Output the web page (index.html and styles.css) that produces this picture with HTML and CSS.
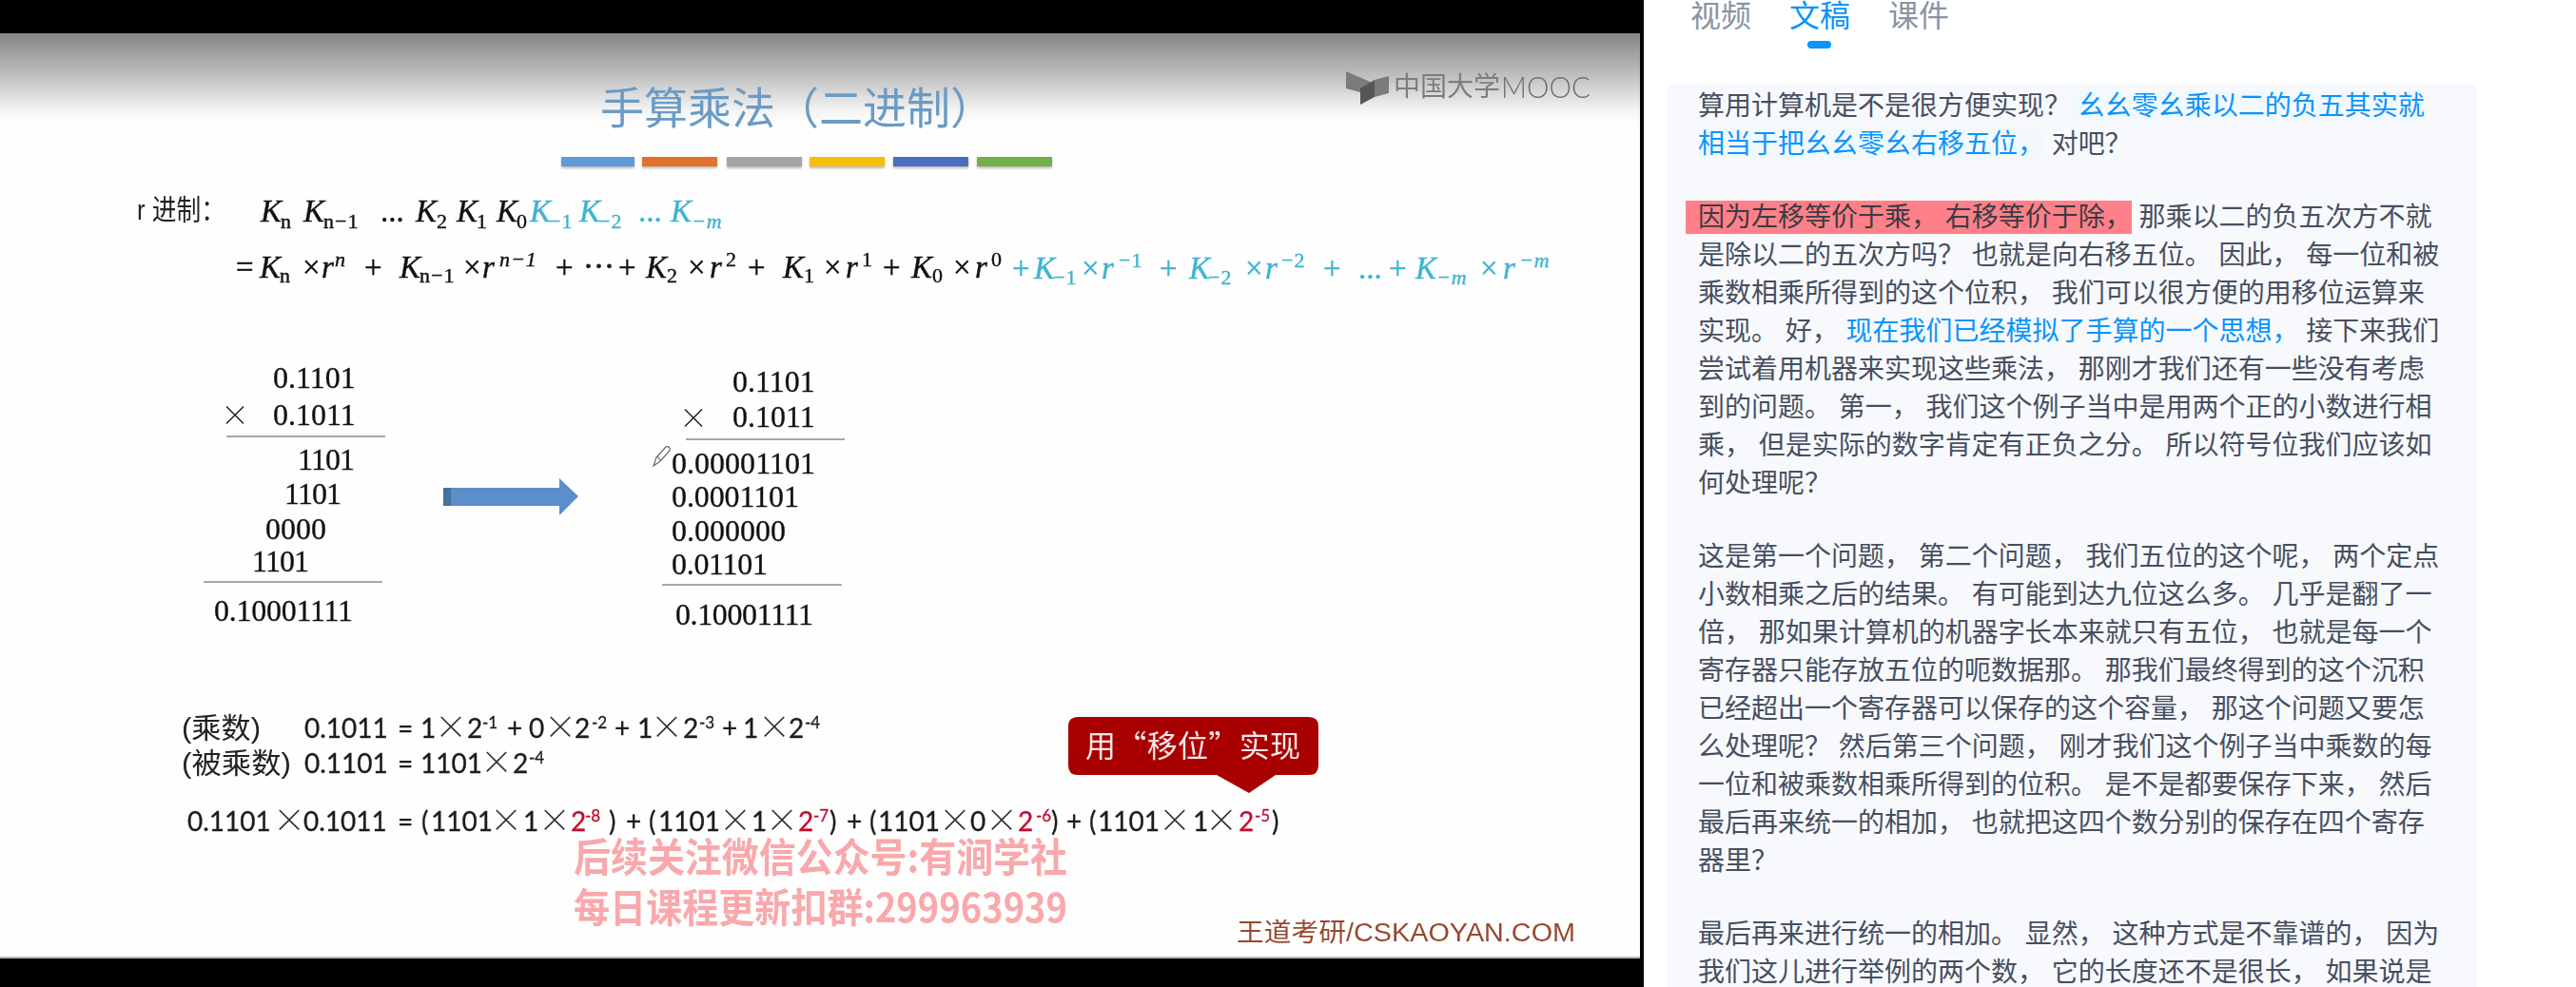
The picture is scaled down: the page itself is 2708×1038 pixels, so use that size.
FILE: index.html
```html
<!DOCTYPE html>
<html lang="zh-CN">
  <head>
    <meta charset="UTF-8" />
    <title>手算乘法（二进制）</title>
    <link rel="stylesheet" href="styles.css">
  </head>
  <body>
    <div class="player">
      <svg class="slide" viewBox="0 35 1724 973" width="1724" height="973">
        <defs>
          <linearGradient id="fade" x1="0" y1="0" x2="0" y2="1">
            <stop offset="0" stop-color="#858585" />
            <stop offset="0.45" stop-color="#bdbdbd" />
            <stop offset="0.85" stop-color="#f3f3f3" />
            <stop offset="1" stop-color="#fefefe" />
          </linearGradient>
        </defs>
        <rect x="0" y="35" width="1724" height="973" fill="#fefefe" />
        <rect x="0" y="35" width="1724" height="95" fill="url(#fade)" />
        <rect x="0" y="1006" width="1724" height="2" fill="#bbb" />

        <text class="title" x="631" y="130" textLength="414" lengthAdjust="spacingAndGlyphs">手算乘法（二进制）</text>
        <rect class="bar" x="590" y="165" width="77" height="10" fill="#5f9bd6" />
        <rect class="bar" x="675" y="165" width="79" height="10" fill="#e2722e" />
        <rect class="bar" x="764" y="165" width="79" height="10" fill="#a5a5a5" />
        <rect class="bar" x="851" y="165" width="79" height="10" fill="#f7bd0b" />
        <rect class="bar" x="939" y="165" width="79" height="10" fill="#4a6fbe" />
        <rect class="bar" x="1027" y="165" width="79" height="10" fill="#72b04c" />

        <!-- mooc logo -->
        <path fill="#7b7b7b" d="M1415 75 L1445 88 V102 L1430 97 L1415 93 Z" />
        <path fill="#7b7b7b" d="M1445 84 L1460 80 V98 L1445 102 Z" />
        <path fill="#565656" d="M1430 93 L1445 84 V102 L1430 110 Z" />
        <text class="logo-cn" x="1465" y="101" textLength="112" lengthAdjust="spacingAndGlyphs">中国大学</text>
        <text class="logo-en" x="1578" y="103" textLength="94" lengthAdjust="spacingAndGlyphs">MOOC</text>

        <text class="cjk-label" x="144" y="231" textLength="93" lengthAdjust="spacingAndGlyphs">r 进制：</text>

        <text class="math">
          <tspan class="k" x="274" y="233">K</tspan><tspan class="sub" x="295" y="240">n</tspan>
          <tspan class="k" x="319" y="233">K</tspan><tspan class="sub" x="340" y="240">n−1</tspan>
          <tspan x="400" y="233">...</tspan>
          <tspan class="k" x="437" y="233">K</tspan><tspan class="sub" x="459" y="240">2</tspan>
          <tspan class="k" x="480" y="233">K</tspan><tspan class="sub" x="501" y="240">1</tspan>
          <tspan class="k" x="522" y="233">K</tspan><tspan class="sub" x="543" y="240">0</tspan>
        </text>
        <text class="math blue">
          <tspan class="k" x="557" y="233">K</tspan><tspan class="sub" x="577" y="240">−1</tspan>
          <tspan class="k" x="609" y="233">K</tspan><tspan class="sub" x="629" y="240">−2</tspan>
          <tspan x="671" y="233">...</tspan>
          <tspan class="k" x="705" y="233">K</tspan><tspan class="sub k" x="727" y="240">−m</tspan>
        </text>

        <text class="math">
          <tspan x="248" y="292">=</tspan>
          <tspan class="k" x="273" y="292">K</tspan><tspan class="sub" x="294" y="297">n</tspan>
          <tspan x="318" y="292">×</tspan><tspan class="k" x="338" y="292">r</tspan><tspan class="sup k" x="352" y="280">n</tspan>
          <tspan x="383" y="292">+</tspan>
          <tspan class="k" x="420" y="292">K</tspan><tspan class="sub" x="441" y="297">n−1</tspan>
          <tspan x="487" y="292">×</tspan><tspan class="k" x="507" y="292">r</tspan><tspan class="sup k" x="525" y="280">n−1</tspan>
          <tspan x="584" y="292">+</tspan><tspan x="613" y="292">⋯</tspan><tspan x="650" y="292">+</tspan>
          <tspan class="k" x="679" y="292">K</tspan><tspan class="sub" x="701" y="297">2</tspan>
          <tspan x="723" y="292">×</tspan><tspan class="k" x="746" y="292">r</tspan><tspan class="sup" x="763" y="280">2</tspan>
          <tspan x="786" y="292">+</tspan>
          <tspan class="k" x="823" y="292">K</tspan><tspan class="sub" x="845" y="297">1</tspan>
          <tspan x="866" y="292">×</tspan><tspan class="k" x="889" y="292">r</tspan><tspan class="sup" x="906" y="280">1</tspan>
          <tspan x="928" y="292">+</tspan>
          <tspan class="k" x="958" y="292">K</tspan><tspan class="sub" x="980" y="297">0</tspan>
          <tspan x="1002" y="292">×</tspan><tspan class="k" x="1025" y="292">r</tspan><tspan class="sup" x="1042" y="280">0</tspan>
        </text>
        <text class="math blue">
          <tspan x="1064" y="293">+</tspan>
          <tspan class="k" x="1087" y="293">K</tspan><tspan class="sub" x="1107" y="299">−1</tspan>
          <tspan x="1137" y="293">×</tspan><tspan class="k" x="1158" y="293">r</tspan><tspan class="sup" x="1176" y="281">−1</tspan>
          <tspan x="1219" y="293">+</tspan>
          <tspan class="k" x="1250" y="293">K</tspan><tspan class="sub" x="1270" y="299">−2</tspan>
          <tspan x="1309" y="293">×</tspan><tspan class="k" x="1330" y="293">r</tspan><tspan class="sup" x="1347" y="281">−2</tspan>
          <tspan x="1391" y="293">+</tspan><tspan x="1428" y="293">...</tspan><tspan x="1460" y="293">+</tspan>
          <tspan class="k" x="1488" y="293">K</tspan><tspan class="sub k" x="1510" y="299">−m</tspan>
          <tspan x="1556" y="293">×</tspan><tspan class="k" x="1580" y="293">r</tspan><tspan class="sup k" x="1597" y="281">−m</tspan>
        </text>

        <!-- left working -->
        <text class="num" x="287" y="408">0.1101</text>
        <text class="times" x="232" y="447">×</text>
        <text class="num" x="287" y="447">0.1011</text>
        <rect class="rule" x="238" y="458" width="167" height="2" />
        <text class="num" x="313" y="494" textLength="60">1101</text>
        <text class="num" x="299" y="530" textLength="60">1101</text>
        <text class="num" x="279" y="567">0000</text>
        <text class="num" x="265" y="601" textLength="60">1101</text>
        <rect class="rule" x="214" y="611" width="188" height="2" />
        <text class="num" x="225" y="653" textLength="146">0.10001111</text>

        <path fill="#5b8fca" d="M466 513 H588 V503 L608 522 L588 542 V532 H466 Z" />
        <rect x="466" y="513" width="8" height="19" fill="#44719f" />

        <!-- right working -->
        <text class="num" x="770" y="412">0.1101</text>
        <text class="times" x="714" y="450">×</text>
        <text class="num" x="770" y="449">0.1011</text>
        <rect class="rule" x="721" y="461" width="167" height="2" />
        <path class="pencil" d="M690 481 L700 470 C703 469 705 471 704 474 L694 485 L687 490 Z M691 480 L695 485" />
        <text class="num" x="706" y="498" textLength="151">0.00001101</text>
        <text class="num" x="706" y="533" textLength="134">0.0001101</text>
        <text class="num" x="706" y="569" textLength="120">0.000000</text>
        <text class="num" x="706" y="604" textLength="101">0.01101</text>
        <rect class="rule" x="696" y="614" width="189" height="2" />
        <text class="num" x="710" y="657" textLength="145">0.10001111</text>

        <!-- weights -->
        <text class="cn" x="191" y="776" textLength="83" lengthAdjust="spacingAndGlyphs">(乘数)</text>
        <text class="cn" x="191" y="813" textLength="115" lengthAdjust="spacingAndGlyphs">(被乘数)</text>
        <text class="sum">
          <tspan x="320" y="776">0.1011</tspan><tspan x="418" y="776">=</tspan>
          <tspan x="442" y="776">1</tspan><tspan class="x" x="457" y="777">×</tspan><tspan x="491" y="776">2</tspan><tspan class="exp" x="507" y="766">-1</tspan>
          <tspan x="533" y="776">+</tspan>
          <tspan x="556" y="776">0</tspan><tspan class="x" x="572" y="777">×</tspan><tspan x="604" y="776">2</tspan><tspan class="exp" x="622" y="766">-2</tspan>
          <tspan x="646" y="776">+</tspan>
          <tspan x="670" y="776">1</tspan><tspan class="x" x="684" y="777">×</tspan><tspan x="718" y="776">2</tspan><tspan class="exp" x="735" y="766">-3</tspan>
          <tspan x="759" y="776">+</tspan>
          <tspan x="781" y="776">1</tspan><tspan class="x" x="797" y="777">×</tspan><tspan x="829" y="776">2</tspan><tspan class="exp" x="846" y="766">-4</tspan>
        </text>
        <text class="sum">
          <tspan x="320" y="813">0.1101</tspan><tspan x="418" y="813">=</tspan>
          <tspan x="442" y="813">1101</tspan><tspan class="x" x="505" y="814">×</tspan><tspan x="539" y="813">2</tspan><tspan class="exp" x="556" y="803">-4</tspan>
        </text>
        <text class="sum">
          <tspan x="197" y="874">0.1101</tspan><tspan class="x" x="287" y="875">×</tspan><tspan x="319" y="874">0.1011</tspan><tspan x="418" y="874">=</tspan>
          <tspan x="443" y="874">(</tspan><tspan x="453" y="874">1101</tspan><tspan class="x" x="515" y="875">×</tspan><tspan x="550" y="874">1</tspan><tspan class="x" x="566" y="875">×</tspan><tspan class="red" x="600" y="874">2</tspan><tspan class="exp red" x="615" y="864">-8</tspan><tspan x="640" y="874">)</tspan>
          <tspan x="658" y="874">+</tspan>
          <tspan x="682" y="874">(</tspan><tspan x="692" y="874">1101</tspan><tspan class="x" x="756" y="875">×</tspan><tspan x="790" y="874">1</tspan><tspan class="x" x="805" y="875">×</tspan><tspan class="red" x="839" y="874">2</tspan><tspan class="exp red" x="855" y="864">-7</tspan><tspan x="872" y="874">)</tspan>
          <tspan x="890" y="874">+</tspan>
          <tspan x="914" y="874">(</tspan><tspan x="923" y="874">1101</tspan><tspan class="x" x="987" y="875">×</tspan><tspan x="1020" y="874">0</tspan><tspan class="x" x="1036" y="875">×</tspan><tspan class="red" x="1070" y="874">2</tspan><tspan class="exp red" x="1089" y="864">-6</tspan><tspan x="1105" y="874">)</tspan>
          <tspan x="1121" y="874">+</tspan>
          <tspan x="1145" y="874">(</tspan><tspan x="1154" y="874">1101</tspan><tspan class="x" x="1218" y="875">×</tspan><tspan x="1254" y="874">1</tspan><tspan class="x" x="1267" y="875">×</tspan><tspan class="red" x="1302" y="874">2</tspan><tspan class="exp red" x="1319" y="864">-5</tspan><tspan x="1337" y="874">)</tspan>
        </text>

        <path fill="#a80000" d="M1133 754 H1376 Q1386 754 1386 764 V805 Q1386 815 1376 815 H1341 L1313 834 L1279 815 H1133 Q1123 815 1123 805 V764 Q1123 754 1133 754 Z" />
        <text class="callout" x="1141" y="796" textLength="226">用“移位”实现</text>

        <text class="mark" x="603" y="917" textLength="519" lengthAdjust="spacingAndGlyphs">后续关注微信公众号:有涧学社</text>
        <text class="mark" x="603" y="970" textLength="519" lengthAdjust="spacingAndGlyphs">每日课程更新扣群:299963939</text>
        <text class="brand" x="1300" y="990" textLength="356" lengthAdjust="spacingAndGlyphs">王道考研/CSKAOYAN.COM</text>
      </svg>
    </div>

    <div class="side">
      <div class="tabs">
        <div class="tab">视频</div>
        <div class="tab active">文稿</div>
        <div class="tab">课件</div>
      </div>
      <div class="transcript">
        <p>算用计算机是不是很方便实现？<span class="note"> 幺幺零幺乘以二的负五其实就相当于把幺幺零幺右移五位，</span> 对吧？</p>
        <p><span class="mark-red">因为左移等价于乘， 右移等价于除，</span> 那乘以二的负五次方不就是除以二的五次方吗？ 也就是向右移五位。 因此， 每一位和被乘数相乘所得到的这个位积， 我们可以很方便的用移位运算来实现。 好， <span class="link">现在我们已经模拟了手算的一个思想，</span> 接下来我们尝试着用机器来实现这些乘法， 那刚才我们还有一些没有考虑到的问题。 第一， 我们这个例子当中是用两个正的小数进行相乘， 但是实际的数字肯定有正负之分。 所以符号位我们应该如何处理呢？</p>
        <p>这是第一个问题， 第二个问题， 我们五位的这个呢， 两个定点小数相乘之后的结果。 有可能到达九位这么多。 几乎是翻了一倍， 那如果计算机的机器字长本来就只有五位， 也就是每一个寄存器只能存放五位的呃数据那。 那我们最终得到的这个沉积已经超出一个寄存器可以保存的这个容量， 那这个问题又要怎么处理呢？ 然后第三个问题， 刚才我们这个例子当中乘数的每一位和被乘数相乘所得到的位积。 是不是都要保存下来， 然后最后再来统一的相加， 也就把这四个数分别的保存在四个寄存器里？</p>
        <p>最后再来进行统一的相加。 显然， 这种方式是不靠谱的， 因为我们这儿进行举例的两个数， 它的长度还不是很长， 如果说是</p>
      </div>
    </div>
  </body>
</html>
```

FILE: styles.css
```css
html,
body {
  margin: 0;
  height: 1038px;
  overflow: hidden;
  background-color: white;
}

body {
  display: flex;
  font-family: "Liberation Sans", "Noto Sans CJK SC", sans-serif;
}

.player {
  flex: 0 0 1728px;
  height: 1038px;
  padding-top: 35px;
  box-sizing: border-box;
  background-color: black;
}

.slide {
  display: block;
}

/* slide text, the frame is a soft video picture */
.slide text {
  filter: blur(0.5px);
}

.title {
  font: 46px "Noto Sans CJK SC", sans-serif;
  fill: #6a9bc4;
}

.bar {
  filter: drop-shadow(0 2px 1px #bbb);
}

.logo-cn {
  font: 28px "Noto Sans CJK SC", sans-serif;
  fill: #7d7d7d;
}

.logo-en {
  font: 300 32px "Lato", sans-serif;
  fill: #6f6f6f;
}

.cjk-label,
.cn {
  font: 30px "Liberation Sans", "Noto Sans CJK SC", sans-serif;
  fill: #222;
}

.math {
  font: 33px "Liberation Serif", serif;
  fill: #111;
  stroke: #111;
  stroke-width: 0.4;
}

.math.blue {
  fill: #3fb3d2;
  stroke: #3fb3d2;
}

.k {
  font-style: italic;
}

.sub,
.sup {
  font-size: 22px;
  letter-spacing: 1px;
}

.num {
  font: 32px "Liberation Serif", serif;
  fill: #111;
  stroke: #111;
  stroke-width: 0.3;
}

.times {
  font: 300 30px "Noto Sans CJK SC", sans-serif;
  fill: #222;
}

.rule {
  fill: #a8a8a8;
}

.pencil {
  fill: white;
  stroke: #666;
  stroke-width: 1.2;
}

.sum {
  font: 28px "Lato", sans-serif;
  fill: #1c1c1c;
  stroke: #1c1c1c;
  stroke-width: 0.3;
}

.sum .x {
  font: 300 34px "Noto Sans CJK SC", sans-serif;
  fill: #333;
  stroke: none;
}

.sum .exp {
  font-size: 17px;
}

.sum .red {
  fill: #c00d2e;
  stroke: #c00d2e;
}

.callout {
  font: 32px "Noto Sans CJK SC", sans-serif;
  fill: #f6e6e6;
}

.mark {
  font: bold 42px "Noto Sans CJK SC", sans-serif;
  fill: #f9a8ab;
}

.brand {
  font: 27px "Liberation Sans", "Noto Sans CJK SC", sans-serif;
  fill: #97492f;
}

/* right column */
.side {
  flex: 1;
  min-width: 0;
}

.tabs {
  display: flex;
  gap: 40px;
  height: 88px;
  padding-left: 49px;
  box-sizing: border-box;
}

.tab {
  position: relative;
  font-size: 32px;
  line-height: 34px;
  color: #8a93a3;
}

.tab.active {
  color: #0a94fb;
}

.tab.active::after {
  content: "";
  position: absolute;
  left: 19px;
  top: 43px;
  width: 25px;
  height: 8px;
  border-radius: 4px;
  background-color: #0a94fb;
}

.transcript {
  width: 852px;
  height: 950px;
  margin-left: 24px;
  padding: 4px 35px 0 33px;
  box-sizing: border-box;
  background-color: #f7f9fd;
  font-size: 28px;
  line-height: 40px;
  color: #474f60;
}

.transcript p {
  margin: 0 0 37px;
}

.note {
  color: #0a94fb;
  background-color: #f1f8fe;
}

.link {
  color: #0a94fb;
}

.mark-red {
  margin-left: -13px;
  padding: 2px 0 2px 13px;
  background-color: #ff8088;
  color: #3c3a44;
}
```
